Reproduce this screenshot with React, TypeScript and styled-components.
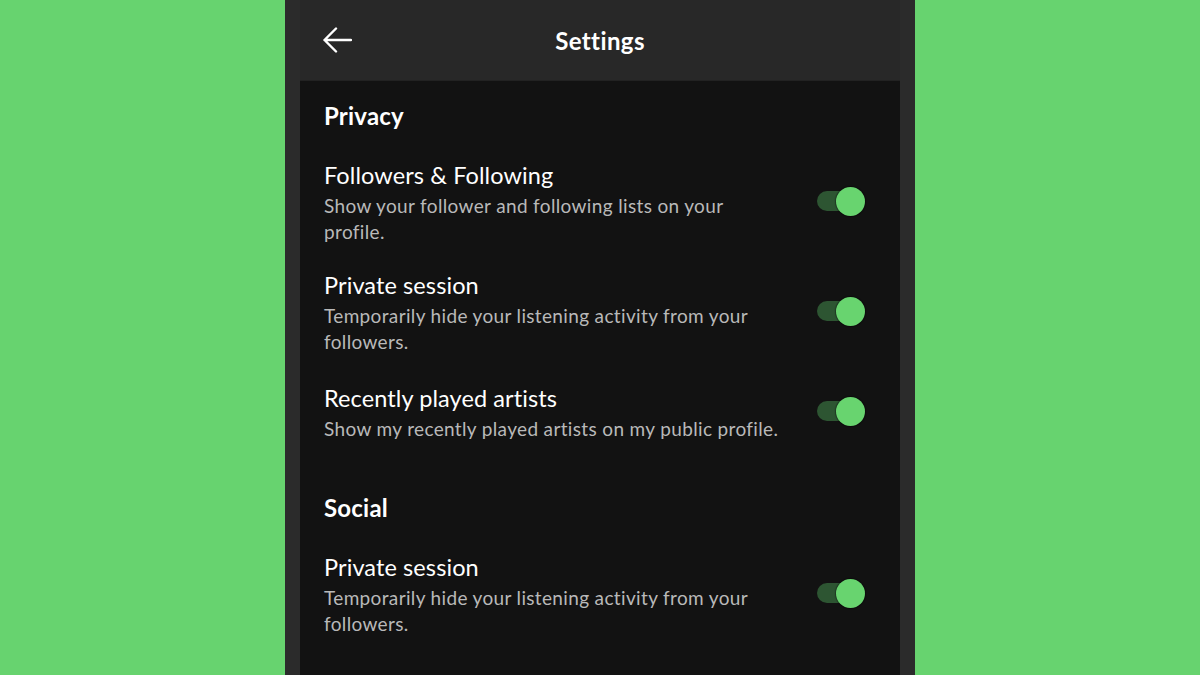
import React from "react";
import styled, { createGlobalStyle } from "styled-components";

const Global = createGlobalStyle`
  html, body { margin: 0; padding: 0; background: #67d36f; }
  body { font-family: "Lato", "Noto Sans", sans-serif; -webkit-font-smoothing: antialiased; }
`;

const Stage = styled.div`
  width: 1200px;
  height: 675px;
  background: #67d36f;
  display: flex;
  justify-content: center;
  overflow: hidden;
`;

const Phone = styled.div`
  width: 600px;
  height: 675px;
  background: #2b2b2b;
  padding: 0 15px;
  display: flex;
  flex-direction: column;
`;

const Header = styled.header`
  height: 81px;
  flex: none;
  background: #282828;
  border-bottom: 1px solid #222;
  box-sizing: border-box;
  display: grid;
  grid-template-columns: 80px 1fr 80px;
  align-items: center;
`;

const BackButton = styled.button`
  background: none;
  border: none;
  padding: 0 0 0 22px;
  display: flex;
  align-items: center;
  cursor: pointer;
  height: 100%;
`;

const Title = styled.h1`
  margin: 0;
  text-align: center;
  color: #fff;
  font-size: 24px;
  font-weight: 700;
  letter-spacing: 0.4px;
`;

const Content = styled.main`
  flex: 1;
  background: #121212;
  padding: 20px 38px 0 24px;
  display: flex;
  flex-direction: column;
`;

const Section = styled.section<{ $gapTop?: number }>`
  display: flex;
  flex-direction: column;
  margin-top: ${(p) => p.$gapTop ?? 0}px;
`;

const SectionTitle = styled.h2`
  margin: 0 0 30px;
  color: #fff;
  font-size: 24px;
  line-height: 30px;
  font-weight: 700;
  letter-spacing: 0.2px;
`;

const Rows = styled.div`
  display: flex;
  flex-direction: column;
  gap: 26px;
`;

const Row = styled.div<{ $extraTop?: number }>`
  display: flex;
  align-items: center;
  justify-content: space-between;
  gap: 20px;
  margin-top: ${(p) => p.$extraTop ?? 0}px;
`;

const Text = styled.div`
  display: flex;
  flex-direction: column;
  max-width: 463px;
`;

const RowTitle = styled.div`
  color: #fff;
  font-size: 23.5px;
  line-height: 28px;
  font-weight: 400;
  letter-spacing: 0.1px;
`;

const RowDesc = styled.div`
  margin-top: 4px;
  color: #b9b9b9;
  font-size: 19px;
  line-height: 26px;
  letter-spacing: 0.35px;
`;

const Track = styled.div`
  position: relative;
  width: 45px;
  height: 20px;
  margin-bottom: 4px;
  border-radius: 10px;
  background: #2d5532;
  flex: none;
`;

const Knob = styled.div`
  position: absolute;
  right: -3px;
  top: 50%;
  width: 29px;
  height: 29px;
  margin-top: -14.5px;
  border-radius: 50%;
  background: #68d46f;
  box-shadow: 0 0 1px 1px rgba(0, 0, 0, 0.35);
`;

const Toggle = () => (
  <Track>
    <Knob />
  </Track>
);

type Item = { t: string; d: string; extra?: number };

const items1: Item[] = [
  { t: "Followers & Following", d: "Show your follower and following lists on your profile." },
  { t: "Private session", d: "Temporarily hide your listening activity from your followers." },
  { t: "Recently played artists", d: "Show my recently played artists on my public profile.", extra: 3 },
];

const items2: Item[] = [
  { t: "Private session", d: "Temporarily hide your listening activity from your followers." },
];

const SettingRows = ({ items }: { items: Item[] }) => (
  <Rows>
    {items.map((it, i) => (
      <Row key={i} $extraTop={it.extra}>
        <Text>
          <RowTitle>{it.t}</RowTitle>
          <RowDesc>{it.d}</RowDesc>
        </Text>
        <Toggle />
      </Row>
    ))}
  </Rows>
);

export default function App() {
  return (
    <Stage>
      <Global />
      <Phone>
        <Header>
          <BackButton aria-label="Back">
            <svg width="30" height="28" viewBox="0 0 30 28" fill="none">
              <path d="M29 14H2.5M14 2.5L2.5 14L14 25.5" stroke="#fff" strokeWidth="2.4" strokeLinecap="round" strokeLinejoin="round" />
            </svg>
          </BackButton>
          <Title>Settings</Title>
          <div />
        </Header>
        <Content>
          <Section>
            <SectionTitle>Privacy</SectionTitle>
            <SettingRows items={items1} />
          </Section>
          <Section $gapTop={51}>
            <SectionTitle>Social</SectionTitle>
            <SettingRows items={items2} />
          </Section>
        </Content>
      </Phone>
    </Stage>
  );
}
